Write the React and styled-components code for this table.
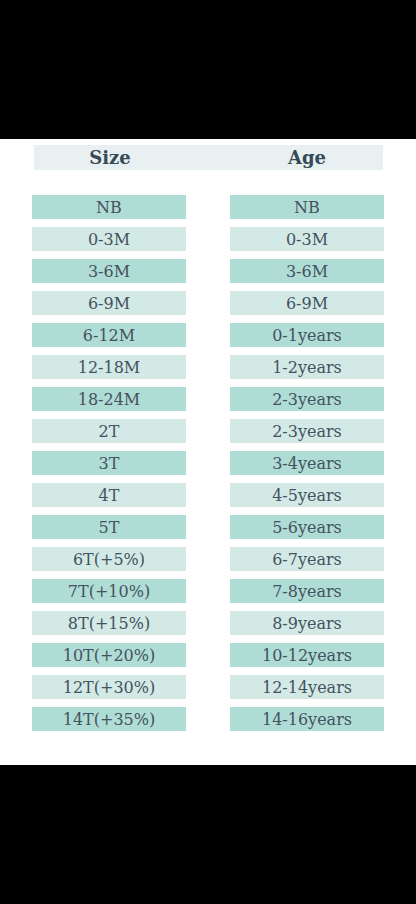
import React from "react";
import styled, { createGlobalStyle } from "styled-components";

const Global = createGlobalStyle`
  html, body { margin: 0; padding: 0; background: #000; }
  body { font-family: "DejaVu Serif", "Liberation Serif", serif; }
`;

const Page = styled.div`
  width: 416px;
  height: 904px;
  background: #000;
  padding-top: 139px;
  box-sizing: border-box;
`;

const Sheet = styled.div`
  background: #fff;
  height: 626px;
  box-sizing: border-box;
  padding: 6px 32px 0 32px;
`;

const HeaderBand = styled.div`
  margin: 0 1px 0 2px;
  height: 25px;
  background: #e8f0f1;
  display: grid;
  grid-template-columns: 152px 152px;
  justify-content: space-between;
  align-items: center;
`;

const HeadCell = styled.div`
  text-align: center;
  font-weight: bold;
  font-size: 18px;
  color: #364a57;
  line-height: 25px;
`;

const Table = styled.div`
  margin-top: 25px;
  display: grid;
  grid-template-columns: 154px 154px;
  justify-content: space-between;
  row-gap: 8px;
`;

const Cell = styled.div`
  height: 24px;
  line-height: 25px;
  text-align: center;
  font-size: 16px;
  color: #43535d;
  background: ${(p) => (p.$dark ? "#b0dcd6" : "#d3e9e6")};
`;

const rows = [
  ["NB", "NB"],
  ["0-3M", "0-3M"],
  ["3-6M", "3-6M"],
  ["6-9M", "6-9M"],
  ["6-12M", "0-1years"],
  ["12-18M", "1-2years"],
  ["18-24M", "2-3years"],
  ["2T", "2-3years"],
  ["3T", "3-4years"],
  ["4T", "4-5years"],
  ["5T", "5-6years"],
  ["6T(+5%)", "6-7years"],
  ["7T(+10%)", "7-8years"],
  ["8T(+15%)", "8-9years"],
  ["10T(+20%)", "10-12years"],
  ["12T(+30%)", "12-14years"],
  ["14T(+35%)", "14-16years"],
];

export default function App() {
  return (
    <Page>
      <Global />
      <Sheet>
        <HeaderBand>
          <HeadCell>Size</HeadCell>
          <HeadCell>Age</HeadCell>
        </HeaderBand>
        <Table>
          {rows.map(([s, a], i) => (
            <React.Fragment key={i}>
              <Cell $dark={i % 2 === 0}>{s}</Cell>
              <Cell $dark={i % 2 === 0}>{a}</Cell>
            </React.Fragment>
          ))}
        </Table>
      </Sheet>
    </Page>
  );
}
